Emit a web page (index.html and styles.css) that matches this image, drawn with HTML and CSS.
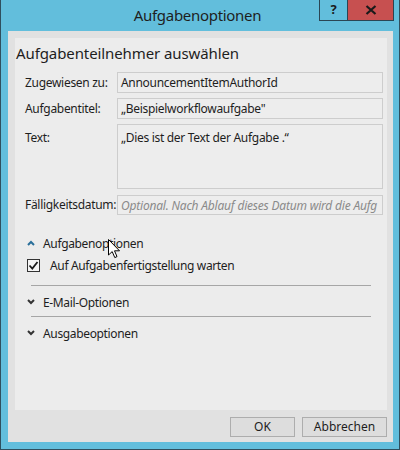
FILE: index.html
```html
<!DOCTYPE html>
<html lang="de">
<head>
<meta charset="utf-8">
<link rel="stylesheet" href="styles.css">
</head>
<body>
<div class="window">
  <div class="titlebar">
    <div></div>
    <div class="title">Aufgabenoptionen</div>
    <div class="controls">
      <div class="help">?</div>
      <div class="close">
        <svg width="12" height="10" viewBox="0 0 12 10"><path d="M1.5 1 L10.5 9 M10.5 1 L1.5 9" stroke="#1a1a1a" stroke-width="2.2"/></svg>
      </div>
    </div>
  </div>
  <div class="client">
    <div class="panel">
      <h1 class="heading">Aufgabenteilnehmer auswählen</h1>
      <div class="form">
        <label class="lbl">Zugewiesen zu:</label>
        <div class="field">AnnouncementItemAuthorId</div>
        <label class="lbl">Aufgabentitel:</label>
        <div class="field">„Beispielworkflowaufgabe"</div>
        <label class="lbl top">Text:</label>
        <div class="field area">„Dies ist der Text der Aufgabe .“</div>
        <label class="lbl">Fälligkeitsdatum:</label>
        <div class="field date">Optional. Nach Ablauf dieses Datum wird die Aufg</div>
      </div>
      <div class="section first">
        <div class="sec-head">
          <svg class="caret" width="8" height="6" viewBox="0 0 8 6"><path d="M1 5 L4 2 L7 5" fill="none" stroke="#2a6f9a" stroke-width="2"/></svg>
          <span>Aufgabenoptionen</span>
          <svg class="cursor" width="13" height="20" viewBox="0 0 13 20"><path d="M0.5 0.5 L0.5 16 L4.2 12.6 L6.8 18.6 L9 17.6 L6.5 11.8 L11.5 11.8 Z" fill="#fff" stroke="#000" stroke-width="1"/></svg>
        </div>
        <div class="check-row">
          <div class="checkbox">
            <svg width="11" height="11" viewBox="0 0 11 11"><path d="M1.5 5.5 L4.3 8.5 L9.5 2" fill="none" stroke="#1a1a1a" stroke-width="1.8"/></svg>
          </div>
          <span>Auf Aufgabenfertigstellung warten</span>
        </div>
      </div>
      <div class="divider first"></div>
      <div class="section">
        <div class="sec-head">
          <svg class="caret" width="8" height="6" viewBox="0 0 8 6"><path d="M1 1 L4 4 L7 1" fill="none" stroke="#333" stroke-width="2"/></svg>
          <span>E-Mail-Optionen</span>
        </div>
      </div>
      <div class="divider"></div>
      <div class="section">
        <div class="sec-head">
          <svg class="caret" width="8" height="6" viewBox="0 0 8 6"><path d="M1 1 L4 4 L7 1" fill="none" stroke="#333" stroke-width="2"/></svg>
          <span>Ausgabeoptionen</span>
        </div>
      </div>
    </div>
    <div class="footer">
      <button class="btn ok">OK</button>
      <button class="btn cancel">Abbrechen</button>
    </div>
  </div>
</div>
</body>
</html>
```
FILE: styles.css
```css
* { box-sizing: border-box; }
html, body { margin: 0; padding: 0; background: #fff; }
body { font-family: "Noto Sans", "DejaVu Sans", sans-serif; color: #1e1e1e; }

.window {
  width: 400px;
  height: 450px;
  background: #62bedc;
  border-left: 1px solid #2f4f5e;
  border-right: 1px solid #2f4f5e;
  border-bottom: 1px solid #2f4f5e;
  display: flex;
  flex-direction: column;
}

.titlebar {
  height: 31px;
  display: grid;
  grid-template-columns: 1fr auto 1fr;
  padding-right: 5px;
}
.title {
  font-size: 15px;
  line-height: 30px;
  color: #1e1e1e;
  letter-spacing: -0.3px;
}
.controls {
  justify-self: end;
  display: flex;
  height: 21px;
}
.help {
  width: 29px;
  height: 21px;
  border: 1px solid #2a4654;
  border-top: none;
  font-weight: bold;
  font-size: 13px;
  line-height: 19px;
  text-align: center;
  color: #1a1a1a;
}
.close {
  width: 46px;
  height: 21px;
  background: #c75050;
  border-bottom: 1px solid #2a4654;
  border-right: 1px solid #2a4654;
  display: flex;
  align-items: center;
  justify-content: center;
}

.client {
  margin: 0 6px 0 7px;
  height: 411px;
  background: #e1e1e1;
  padding: 7px 6px 0 7px;
  display: flex;
  flex-direction: column;
}

.panel {
  height: 372px;
  background: #ececec;
  padding: 5px 0 0 1px;
}

.heading {
  margin: 0;
  font-size: 15px;
  font-weight: normal;
  line-height: 20px;
  letter-spacing: -0.1px;
}

.form {
  margin: 9px 0 0 9px;
  display: grid;
  grid-template-columns: 92px 266px;
  row-gap: 5px;
  font-size: 12px;
}
.lbl {
  display: flex;
  align-items: center;
  letter-spacing: -0.3px;
}
.lbl.top { align-items: flex-start; padding-top: 5px; }
.field {
  height: 21px;
  border: 1px solid #cdcdcd;
  background: #ededed;
  padding: 0 3px;
  line-height: 19px;
  letter-spacing: -0.3px;
  white-space: nowrap;
  overflow: hidden;
}
.field.area { height: 65px; padding-top: 3px; }
.field.date {
  margin-top: 1px;
  height: 20px;
  color: #8a8a8a;
  font-style: italic;
  font-size: 12px;
  letter-spacing: -0.2px;
}

.section { margin-left: 11px; font-size: 12px; }
.section.first { margin-top: 18px; }
.sec-head {
  height: 20px;
  display: flex;
  align-items: center;
  position: relative;
  letter-spacing: -0.35px;
}
.caret { margin-right: 8px; }
.cursor { position: absolute; left: 81px; top: 6px; }

.check-row {
  margin-top: 4px;
  display: flex;
  align-items: center;
  height: 16px;
  letter-spacing: -0.35px;
}
.checkbox {
  width: 13px;
  height: 13px;
  border: 1px solid #333;
  background: #f5f5f5;
  margin-right: 10px;
  display: flex;
  align-items: center;
  justify-content: center;
}

.divider {
  margin: 4px 0 0 15px;
  width: 340px;
  height: 1px;
  background: #a6a6a6;
}
.divider.first { margin-top: 12px; }
.divider + .section { margin-top: 6px; }

.footer {
  display: flex;
  justify-content: flex-end;
  gap: 7px;
  padding-top: 7px;
}
.btn {
  height: 20px;
  border: 1px solid #adadad;
  background: #dddddd;
  font-family: "Noto Sans", "DejaVu Sans", sans-serif;
  font-size: 12px;
  color: #1e1e1e;
  padding: 0;
  line-height: 18px;
}
.btn.ok { width: 65px; }
.btn.cancel { width: 85px; }
```
